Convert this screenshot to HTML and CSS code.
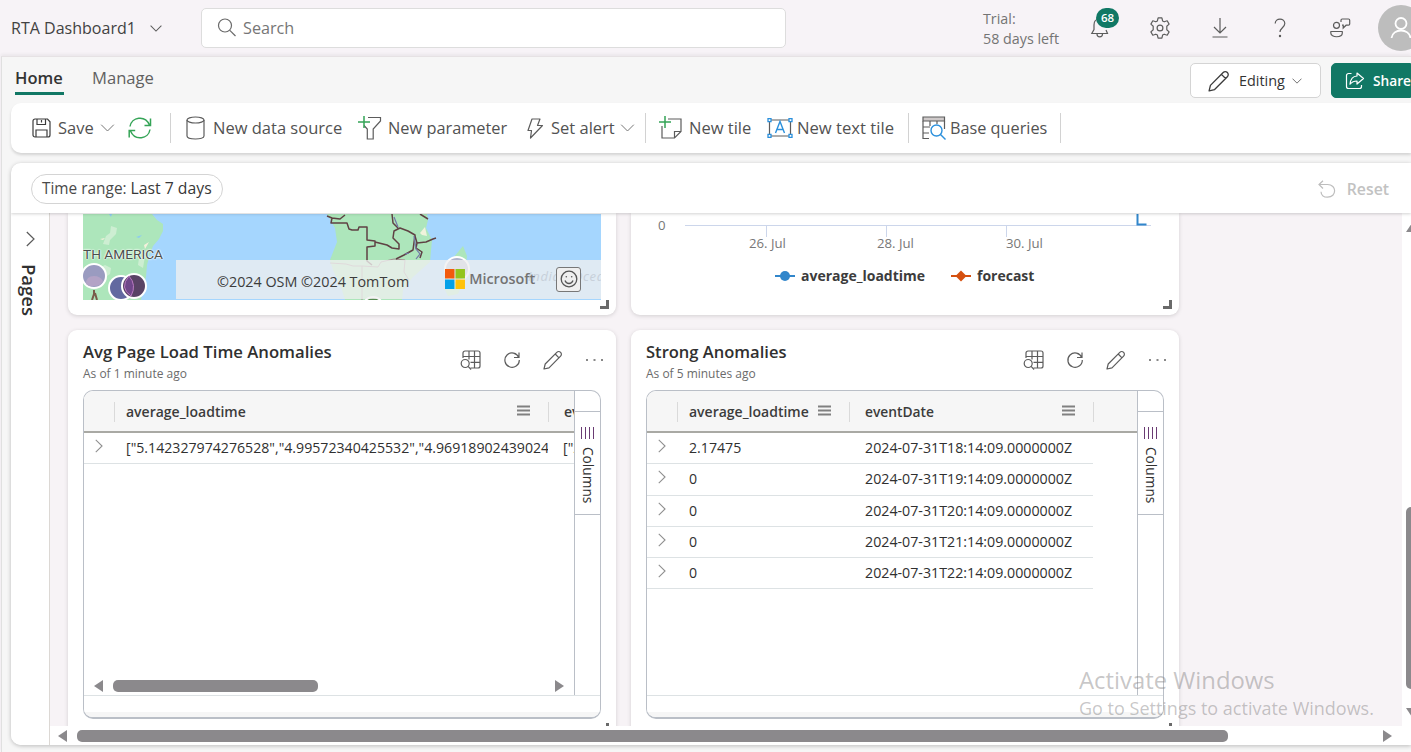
FILE: index.html
```html
<!DOCTYPE html>
<html lang="en">
<head>
<meta charset="utf-8">
<title>RTA Dashboard1</title>
<link rel="stylesheet" href="styles.css">
</head>
<body>
<svg class="sprite" aria-hidden="true">
  <symbol id="i-chevron" viewBox="0 0 14 8"><path d="M.7.7 7 7 13.3.7"/></symbol>
  <symbol id="i-chevron-right" viewBox="0 0 9 16"><path d="M.8 1 8 8 .8 15"/></symbol>
  <symbol id="i-pencil" viewBox="0 0 20 20"><path d="M1 19l1.200-5L13.800 2.300a2.600 2.600 0 0 1 3.800 3.800L6 17.800zM12.200 4l3.800 3.800" stroke-linejoin="round"/></symbol>
  <symbol id="i-explore" viewBox="0 0 22 20"><path d="M3 8V3a2 2 0 0 1 2-2H18a2 2 0 0 1 2 2v13a2 2 0 0 1-2 2h-7.500M9 1v8.500M14.500 1v17M3 6.500h17M10.500 12.300h9.500"/><circle cx="5.200" cy="13.500" r="4"/><path d="M8.100 16.400l3 3.100"/></symbol>
  <symbol id="i-reload" viewBox="0 0 18 18"><path d="M15.800 6.500A7.200 7.200 0 1 0 16.300 9M16 1.500V6.500H11"/></symbol>
  <symbol id="i-menu" viewBox="0 0 13 12"><path d="M0 1.500h13M0 5.500h13M0 9.500h13"/></symbol>
</svg>

<header class="topbar">
  <div class="workspace">RTA Dashboard1 <svg class="icon workspace-chevron" width="12" height="7"><use href="#i-chevron"/></svg></div>
  <div class="search">
    <svg class="icon" width="20" height="20" viewBox="0 0 20 20"><circle cx="8" cy="7.500" r="6.500"/><path d="M12.800 12.300l5.700 5.700"/></svg>
    <span>Search</span>
  </div>
  <div class="trial">Trial:<br>58 days left</div>
  <div class="top-actions">
    <div class="bell">
      <svg class="icon" width="20" height="22" viewBox="0 0 20 22"><path d="M9.500 2C5.500 2 4 5 4 8v4.500L1.800 16.500h15.700L16 13M7 17c0 3.800 5.500 3.800 5.500 0"/></svg>
      <span class="badge">68</span>
    </div>
    <svg class="icon" width="24" height="24" viewBox="0 0 24 24"><circle cx="12" cy="12" r="2.900"/><path d="M10.100 1.800h3.800l.7 3.100 1.600.9 3-1 1.900 3.300-2.300 2.100v3.600l2.300 2.100-1.900 3.300-3-1-1.600.9-.7 3.100h-3.800l-.7-3.100-1.600-.9-3 1-1.900-3.300 2.300-2.100v-3.600L2.900 8.100l1.900-3.300 3 1 1.600-.9z" stroke-linejoin="round"/></svg>
    <svg class="icon" width="20" height="22" viewBox="0 0 20 22"><path d="M10 1v14.500M4 10l6 6 6-6M2.500 20h15"/></svg>
    <svg class="icon" width="14" height="20" viewBox="0 0 14 20"><path d="M2.200 5.500C2.200-.5 11.800-.3 11.800 5.500c0 4-4.800 4.500-4.800 8.500"/><circle cx="7" cy="18" r=".6"/></svg>
    <svg class="icon" width="22" height="22" viewBox="0 0 22 22"><circle cx="7.500" cy="8.300" r="3"/><path d="M1.800 14.500h11.500v1.500c0 5-11.500 5-11.500 0z" stroke-linejoin="round"/><path d="M12 5V3.200A1.200 1.200 0 0 1 13.200 2h6.300a1.200 1.200 0 0 1 1.200 1.200V7a1.200 1.200 0 0 1-1.200 1.200h-2.400L14.200 11V8.200H13"/></svg>
  </div>
  <div class="avatar"><svg width="24" height="24" viewBox="0 0 24 24"><circle cx="12" cy="7.500" r="5.500"/><path d="M2.500 22c1-10 18-10 19 0"/></svg></div>
</header>

<main class="shell">
  <nav class="tabs">
    <span class="tab tab-active">Home</span>
    <span class="tab">Manage</span>
    <div class="mode">
      <button class="btn btn-edit"><svg class="icon dark" width="22" height="22"><use href="#i-pencil"/></svg><span>Editing</span><svg class="icon" width="10" height="6"><use href="#i-chevron"/></svg></button>
      <button class="btn btn-share"><svg class="icon" width="20" height="18" viewBox="0 0 20 18"><path d="M6.500 1.500H3.500a2 2 0 0 0-2 2v11a2 2 0 0 0 2 2h11a2 2 0 0 0 2-2V13M12 1l6.500 5.500L12 12V9c-3 0-5 .8-7 3.200C5.500 7.500 8 4.200 12 4z" stroke-linejoin="round"/></svg><span>Share</span></button>
    </div>
  </nav>

  <section class="toolbar">
    <div class="cmd cmd-save">
      <svg class="icon dark" width="19" height="20" viewBox="0 0 19 20"><path d="M1 3a2 2 0 0 1 2-2h12.500L18 3.800V17a2 2 0 0 1-2 2H3a2 2 0 0 1-2-2zM5 1v5.500h8.500V1M4 19v-7h11v7M9.500 2v2.500"/></svg>
      <span>Save</span>
      <svg class="icon thin" width="15" height="8"><use href="#i-chevron"/></svg>
    </div>
    <div class="cmd"><svg class="icon green refresh" width="24" height="22" viewBox="0 0 24 22"><path d="M2 9.500C3.500 0 17 -2.500 21.500 8M22.500 1.500v7h-6M22 12.500C20.500 22 7 24.500 2.500 14M1.200 20.500v-7h6"/></svg></div>
    <div class="cmd ruled pad-wide"><svg class="icon" width="20" height="24" viewBox="0 0 20 24"><ellipse cx="9.500" cy="4" rx="8.500" ry="3"/><path d="M1 4v16c0 4 17 4 17 0V4"/></svg><span class="after-db">New data source</span></div>
    <div class="cmd"><svg class="icon" width="24" height="24" viewBox="0 0 24 24"><path d="M10 1.500h12.500V5l-7.300 8v10H9.300V13L6 9.500"/><path class="green" d="M6 0v12M0 6h12"/></svg><span class="after-param">New parameter</span></div>
    <div class="cmd"><svg class="icon" width="17" height="21" viewBox="0 0 17 21"><path d="M5 1h8L10.500 7.500H15.500L3.500 20 4.500 12.500H1z" stroke-linejoin="round"/></svg><span class="after-bolt">Set alert</span><svg class="icon thin" width="15" height="8"><use href="#i-chevron"/></svg></div>
    <div class="cmd ruled"><svg class="icon" width="24" height="24" viewBox="0 0 24 24"><path d="M9 3h13v12.500L15.500 22H3V10M22 15.500h-6.500V22"/><path class="green" d="M6 0v12M0 6h12"/></svg><span class="after-tile">New tile</span></div>
    <div class="cmd"><svg class="icon" width="26" height="20" viewBox="0 0 26 20"><path d="M2.500 2h21v16h-21z"/><path class="blue" d="M8.500 15l4.500-11.500L17.500 15M10 11.500h6"/><g class="handle"><path d="M1 .6h3v3H1zM22 .6h3v3h-3zM1 16.400h3v3H1zM22 16.400h3v3h-3z"/></g></svg><span class="after-text">New text tile</span></div>
    <div class="cmd ruled"><svg class="icon" width="24" height="24" viewBox="0 0 24 24"><path class="fill-head" d="M1 1h21.500v4H1z"/><path d="M7 22.500H1V5M22.500 5v8M1 11h7M1 17h6M8 5v5M15 5v3"/><g class="blue"><circle cx="14.500" cy="14.500" r="5.500"/><path d="M18.500 18.500l5 5"/></g></svg><span class="after-base">Base queries</span></div>
    <div class="cmd ruled"></div>
  </section>

  <section class="board">
    <div class="filterbar">
      <span class="pill">Time range: <b>Last 7 days</b></span>
      <span class="reset"><svg class="icon" width="18" height="18" viewBox="0 0 18 18"><path d="M1 4.500h8.500c9.500 0 9.500 12.700 0 12.700-4 0-6.300-2.500-6.500-5.500M5 .8L1 4.500l4 4"/></svg>Reset</span>
    </div>
    <div class="workarea">
      <aside class="pages"><svg class="icon" width="9" height="16"><use href="#i-chevron-right"/></svg><span>Pages</span></aside>
      <div class="stage">
        <div class="canvas">
          <article class="card card-map">
            <div class="map">
              <svg width="518" height="86" viewBox="0 0 518 86">
                <rect width="518" height="86" fill="#a5d6fe"/>
                <path fill="#ade6bb" d="M0 0H69L74 6l6 4v7l-4 8-6 7-3 8-3 11-1 12-3 10-2 13H0z"/>
                <path fill="#cdeed2" d="M28 12l6 2-1 6-6 6-1 5-6-1 3-8 4-3zM16 54l6-3 6 3-1 6-6 4-5-4zM56 44l6-2-2 12-5-3z"/>
                <path fill="#f5f0dc" d="M17 25l5-1-2 2zM61 31l5-3-4 7z"/>
                <path fill="#8dcbf0" d="M53 23l6-2-3 3zM26 0h3l-1 3z"/>
                <path fill="#ade6bb" d="M244 0l8 14 2 14-7 18 3 10 9 20 3 10h57l1-10 10-13 17-15 2-22-6-12 2-8-1-6zM380 32l4 10-3 24-6 14-10 2-3-6v-14l4-13z"/>
                <path fill="#f0f3dc" d="M342 13l-5 6 2 2 5 1z"/>
                <path fill="none" stroke="#a68d92" d="M247 49l16 1 7 2h9v34M279 52l16 1 3-5 13-3 11 1-1 12 5 8"/>
                <g fill="none" stroke="#5f4244" stroke-width="1.500" stroke-linejoin="round">
                  <path d="M244 2l5 2-1 5h16l2 6 3 1h6l1-3h8v13l8 1v5l-8 1v14l5 4M249 4l8 1 5-4M292 28l12 3 5 3 7 1v-5l-6-6 1-7 6-3 8 3 7 4-2 15-9 5-8 4M309 0l1 9 5 5M332 22l2 7 9-1 7-3 3-1M334 29l-1 5 6 4-2 6M337 0l8 5"/>
                </g>
                <path fill="none" stroke="#7277a8" stroke-width="1.200" d="M311 3l4 10M331 22l2 13 4 5-4 5M322 40l4-1"/>
                <path fill="none" stroke="#795b4a" stroke-width="2" d="M11 76v4l-2 6M12 79l2 7"/>
                <g stroke="#fff" stroke-width="2">
                  <circle cx="11" cy="62" r="12" fill="#9a9bc0"/>
                  <circle cx="38" cy="74" r="12" fill="#6269a0"/>
                  <circle cx="51" cy="72" r="12" fill="#594365"/>
                  <circle cx="374" cy="55" r="12" fill="#b0b4cc"/>
                  <circle cx="290" cy="93" r="10" fill="#548b50"/>
                </g>
                <path fill="#b3a3c6" d="M3 70q0-8 8-8 6 0 9 5-2 5-9 5-5 1-8-2z"/>
                <path fill="#70478a" stroke="#b87abf" d="M46 62q8 9 2 20-12-8-2-20z"/>
              </svg>
              <span class="map-continent">TH AMERICA</span>
              <div class="map-credit">
                <span>©2024 OSM ©2024 TomTom</span>
                <i class="ocean">Indian Ocean</i>
                <svg class="ms-logo" width="20" height="20" viewBox="0 0 20 20"><path fill="#f25a0c" d="M0 0h9.500v9.500H0z"/><path fill="#93c41c" d="M10.500 0H20v9.500h-9.500z"/><path fill="#05a1e8" d="M0 10.500h9.500V20H0z"/><path fill="#ffc20a" d="M10.500 10.500H20V20h-9.500z"/></svg>
                <b>Microsoft</b>
                <span class="smile"><svg width="18" height="18" viewBox="0 0 18 18"><circle cx="9" cy="9" r="7.800"/><path d="M5 10.500c1.500 4 6.500 4 8 0"/><circle class="eye" cx="6.300" cy="6.800" r=".8"/><circle class="eye" cx="11.700" cy="6.800" r=".8"/></svg></span>
              </div>
            </div>
            <i class="grip"></i>
          </article>

          <article class="card card-chart">
            <svg width="548" height="101" viewBox="0 0 548 101">
              <path d="M54 11.500H520M135.500 11.500V23M255.500 11.500V23M375.500 11.500V23" fill="none" stroke="#ccd6eb"/>
              <path d="M506.500 0v10.500h9" fill="none" stroke="#3186cb" stroke-width="2"/>
              <g class="axis"><text x="27" y="15.500">0</text><text x="118" y="34">26. Jul</text><text x="246" y="34">28. Jul</text><text x="375" y="34">30. Jul</text></g>
              <path d="M144 62h20" stroke="#3186cb" stroke-width="2"/><circle cx="154" cy="62" r="5" fill="#3186cb"/>
              <path d="M320 62h20" stroke="#d5500f" stroke-width="2"/><path d="M330 56.500l5.500 5.500-5.500 5.500-5.500-5.500z" fill="#d5500f"/>
              <g class="legend"><text x="170" y="67">average_loadtime</text><text x="346" y="67">forecast</text></g>
            </svg>
            <i class="grip"></i>
          </article>

          <article class="card card-table">
            <header class="card-head">
              <div><h2>Avg Page Load Time Anomalies</h2><p>As of 1 minute ago</p></div>
              <div class="card-tools">
                <svg class="icon" width="22" height="20"><use href="#i-explore"/></svg>
                <svg class="icon" width="18" height="18"><use href="#i-reload"/></svg>
                <svg class="icon" width="20" height="20"><use href="#i-pencil"/></svg>
                <svg class="dots" width="18" height="4" viewBox="0 0 18 4"><path d="M0 1h2v2H0zM7.500 1h2v2h-2zM15 1h2v2h-2z"/></svg>
              </div>
            </header>
            <div class="grid">
              <div class="grid-main">
                <div class="grid-view">
                  <div class="row row-head cols-wide"><span class="cell-exp"></span><span class="cell">average_loadtime<svg class="menu" width="13" height="12"><use href="#i-menu"/></svg></span><span class="cell cell-cut">eventDate</span></div>
                  <div class="row cols-wide"><span class="cell-exp"><svg class="icon" width="8" height="14"><use href="#i-chevron-right"/></svg></span><span class="cell cell-list">["5.142327974276528","4.99572340425532","4.96918902439024</span><span class="cell cell-cut">["2024</span></div>
                  <div class="hscroll"><i class="arrow-left"></i><i class="thumb"></i><i class="arrow-right"></i></div>
                </div>
                <div class="side"><div class="side-btn"><i class="bars"></i><span>Columns</span></div></div>
              </div>
              <div class="grid-foot"></div>
            </div>
            <i class="grip grip-cut"></i>
          </article>

          <article class="card card-table">
            <header class="card-head">
              <div><h2 class="h-strong">Strong Anomalies</h2><p>As of 5 minutes ago</p></div>
              <div class="card-tools">
                <svg class="icon" width="22" height="20"><use href="#i-explore"/></svg>
                <svg class="icon" width="18" height="18"><use href="#i-reload"/></svg>
                <svg class="icon" width="20" height="20"><use href="#i-pencil"/></svg>
                <svg class="dots" width="18" height="4" viewBox="0 0 18 4"><path d="M0 1h2v2H0zM7.500 1h2v2h-2zM15 1h2v2h-2z"/></svg>
              </div>
            </header>
            <div class="grid">
              <div class="grid-main">
                <div class="grid-view">
                  <div class="row row-head cols-narrow"><span class="cell-exp"></span><span class="cell">average_loadtime<svg class="menu" width="13" height="12"><use href="#i-menu"/></svg></span><span class="cell">eventDate<svg class="menu" width="13" height="12"><use href="#i-menu"/></svg></span><span class="cell-end"></span></div>
                  <div class="row cols-narrow"><span class="cell-exp"><svg class="icon" width="8" height="14"><use href="#i-chevron-right"/></svg></span><span class="cell">2.17475</span><span class="cell">2024-07-31T18:14:09.0000000Z</span></div>
                  <div class="row cols-narrow"><span class="cell-exp"><svg class="icon" width="8" height="14"><use href="#i-chevron-right"/></svg></span><span class="cell">0</span><span class="cell">2024-07-31T19:14:09.0000000Z</span></div>
                  <div class="row cols-narrow"><span class="cell-exp"><svg class="icon" width="8" height="14"><use href="#i-chevron-right"/></svg></span><span class="cell">0</span><span class="cell">2024-07-31T20:14:09.0000000Z</span></div>
                  <div class="row cols-narrow"><span class="cell-exp"><svg class="icon" width="8" height="14"><use href="#i-chevron-right"/></svg></span><span class="cell">0</span><span class="cell">2024-07-31T21:14:09.0000000Z</span></div>
                  <div class="row cols-narrow"><span class="cell-exp"><svg class="icon" width="8" height="14"><use href="#i-chevron-right"/></svg></span><span class="cell">0</span><span class="cell">2024-07-31T22:14:09.0000000Z</span></div>
                </div>
                <div class="side"><div class="side-btn"><i class="bars"></i><span>Columns</span></div></div>
              </div>
              <div class="grid-foot"></div>
            </div>
            <i class="grip grip-cut"></i>
          </article>
        </div>
        <div class="vscroll"><i class="arrow-up"></i><i class="vthumb"></i><i class="arrow-down"></i></div>
        <div class="hscroll stage-scroll"><i class="arrow-left"></i><i class="thumb"></i><i class="arrow-right"></i></div>
      </div>
    </div>
  </section>
</main>

<div class="watermark"><strong>Activate Windows</strong><span>Go to Settings to activate Windows.</span></div>
</body>
</html>
```
FILE: styles.css
```css
* { box-sizing: border-box; }
body { margin: 0; width: 1411px; height: 752px; overflow: hidden; background: #f7f3f7; color: #484848; font-family: "Open Sans", "Noto Sans", sans-serif; font-size: 16.4px; line-height: 20px; white-space: nowrap; }
.sprite { position: absolute; width: 0; height: 0; }
.icon { display: block; flex: none; fill: none; stroke: #5c5c5c; stroke-width: 1.200; }
.icon.dark { stroke: #3c3c3c; }
.icon.thin { stroke: #777; stroke-width: 1; }
.icon.green, .icon .green { stroke: #35a457; stroke-width: 1.500; }
.icon .blue { stroke: #2b90dc; stroke-width: 1.400; }
.icon .handle { fill: #fff; stroke: #2b90dc; stroke-width: 1.300; }
.icon .fill-head { fill: #cfcaca; }

/* top bar */
.topbar { display: flex; align-items: center; height: 56px; padding-left: 11px; overflow: hidden; }
.topbar > * { flex: none; }
.workspace { display: flex; align-items: center; gap: 14px; width: 190px; font-size: 16.050px; color: #424242; }
.search { display: flex; align-items: center; gap: 6px; width: 585px; height: 40px; padding-left: 15px; background: #fff; border: 1px solid #ddd; border-radius: 5px; font-size: 16.200px; color: #767676; }
.search .icon { stroke: #6a6a6a; }
.trial { width: 77px; margin-left: 197px; padding-top: 1px; font-size: 14.300px; color: #747474; }
.top-actions { display: grid; grid-template-columns: repeat(5, 60px); justify-items: center; align-items: center; margin-left: 10px; }
.bell { position: relative; }
.badge { position: absolute; left: 6px; top: -9px; width: 23px; height: 20px; border-radius: 10px; background: #117865; color: #fff; font-size: 11.500px; font-weight: 600; line-height: 20px; text-align: center; }
.avatar { display: flex; align-items: center; justify-content: center; width: 46px; height: 46px; margin-left: 8px; border-radius: 50%; background: #bdbdbd; }
.avatar svg { fill: none; stroke: #fff; stroke-width: 1.800; }

/* ribbon */
.shell { height: 696px; margin-left: 1px; border-top: 1px solid #e6e2e4; border-left: 1px solid #e0e0e0; background: #f6f6f6; box-shadow: 0 -2px 3px rgba(0,0,0,.05); }
.tabs { display: flex; height: 46px; padding-left: 13px; gap: 28px; color: #616161; }
.tab { height: 38px; padding-top: 11px; font-size: 16.600px; }
.tab-active { width: 49px; border-bottom: 3px solid #117865; font-weight: 600; color: #333; font-size: 16.500px; }
.mode { display: flex; gap: 10px; margin: 6px 0 0 auto; }
.btn { display: flex; align-items: center; height: 35px; padding: 0; border: 1px solid #d4d4d4; border-radius: 5px; background: #fff; color: #333; font: 14.400px "Open Sans", sans-serif; }
.btn-edit { width: 131px; padding-left: 17px; }
.btn-edit span { width: 53px; margin-left: 9px; text-align: left; }
.btn-share { width: 80px; padding-left: 13px; border-color: #117865; border-radius: 5px 0 0 5px; background: #117865; color: #fff; font-weight: 600; font-size: 13.700px; }
.btn-share span { margin-left: 8px; }
.btn-share .icon { stroke: #fff; }
.toolbar { display: grid; grid-template-columns: 97px 41px 188px 169px 118px 122px 141px 152px 20px; height: 50px; margin-left: 9px; padding: 10px 0 10px 21px; background: #fff; border-radius: 10px 0 0 10px; box-shadow: 0 2px 3px rgba(0,0,0,.14); font-size: 16.500px; color: #525252; }
.cmd { display: flex; align-items: center; height: 30px; }
.cmd-save { gap: 5px; }
.cmd-save span { width: 37px; margin-left: 2px; }
.refresh { margin-left: -1px; }
.ruled { border-left: 1px solid #d2d2d2; padding-left: 13px; }
.pad-wide { padding-left: 15px; }
.after-db { margin-left: 7px; }
.after-param { margin-left: 6px; font-size: 16.350px; }
.after-bolt { margin-left: 7px; width: 69px; }
.after-tile { margin-left: 6px; }
.after-text { margin-left: 4px; font-size: 16.650px; }
.after-base { margin-left: 4px; font-size: 16.250px; }

/* dashboard panel */
.board { height: 582px; margin: 10px 0 0 9px; background: #fff; border-radius: 10px 0 0 10px; box-shadow: 0 1px 4px rgba(0,0,0,.24); overflow: hidden; }
.filterbar { position: relative; z-index: 1; display: flex; align-items: center; justify-content: space-between; height: 50px; padding: 1px 22px 0 20px; background: #fff; box-shadow: 0 1px 3px rgba(0,0,0,.18); }
.pill { height: 30px; width: 192px; padding-left: 10px; border: 1px solid #d4d4d4; border-radius: 15px; font-size: 15.400px; line-height: 27px; color: #4a4a4a; }
.pill b { font-weight: 400; font-size: 15.750px; color: #383838; }
.reset { display: flex; align-items: center; gap: 11px; font-size: 15.800px; font-weight: 600; color: #c2c2c2; }
.reset .icon { stroke: #bdbdbd; }
.workarea { display: flex; height: 532px; }
.pages { display: flex; flex-direction: column; align-items: center; gap: 17px; width: 39px; padding-top: 18px; border-right: 1px solid #dcd8d4; background: #fff; }
.pages .icon { margin-left: 1px; }
.pages span { writing-mode: vertical-rl; font-size: 18.500px; font-weight: 600; color: #303030; line-height: 24px; margin-right: 2px; }
.stage { display: grid; grid-template: 513px 19px / 1352px 9px; }
.canvas { display: grid; grid-template: 102px 405px / 548px 548px; gap: 15px; height: 513px; padding-left: 18px; overflow: hidden; background: #f7f3f6; }
.card { position: relative; background: #fff; border-radius: 9px; box-shadow: 0 1px 4px rgba(0,0,0,.15); }
.card-map, .card-chart { padding-top: 1px; border-radius: 0 0 9px 9px; }
.grip { position: absolute; right: 7px; bottom: 6px; width: 9px; height: 9px; border: solid #6a6a6a; border-width: 0 3px 3px 0; }
.grip-cut { bottom: 3px; }

/* map */
.map { position: relative; width: 518px; height: 86px; margin-left: 15px; overflow: hidden; }
.map svg { display: block; }
.map-continent { position: absolute; left: 0; top: 30px; font: 13.700px/20px Roboto, sans-serif; color: #4b4f4d; text-shadow: 0 0 2px #fff, 0 0 2px #fff, 0 0 1px #fff; }
.map-credit { position: absolute; left: 93px; top: 46px; display: flex; align-items: center; width: 425px; height: 39px; padding: 4px 20px 0 41px; background: rgba(239,239,240,.78); font-size: 14.350px; color: #3c3c3c; }
.map-credit b { width: 87px; margin: -5px 0 0 4px; font-weight: 600; color: #737373; font-size: 14.400px; z-index: 1; }
.ms-logo { margin: -6px 0 0 36px; }
.ocean { position: absolute; left: 352px; top: 6px; font-size: 13px; letter-spacing: .7px; color: #c7d0da; }
.smile { display: flex; align-items: center; justify-content: center; width: 25px; height: 25px; margin-top: -5px; border: 1px solid #777; border-radius: 3px; background: #efefef; z-index: 1; }
.smile svg { fill: none; stroke: #555; stroke-width: 1.300; }
.smile .eye { fill: #555; stroke: none; }

/* chart */
.card-chart > svg { display: block; }
.axis { font-size: 13.200px; fill: #777; }
.legend { font-size: 14px; font-weight: 700; fill: #3c3c3c; }

/* table tiles */
.card-head { display: flex; justify-content: space-between; height: 60px; padding: 12px 13px 0 15px; }
h2 { margin: 0; font-size: 16.700px; line-height: 20px; font-weight: 600; color: #303030; }
.h-strong { font-size: 16.550px; }
.card-head p { margin: 3px 0 0; font-size: 11.980px; line-height: 18px; color: #6b6b6b; }
.card-tools { display: flex; align-items: center; height: 36px; }
.card-tools .icon:nth-child(2) { margin-left: 21px; }
.card-tools .icon:nth-child(3) { margin-left: 22px; }
.dots { margin-left: 23px; margin-right: -1px; fill: #888; }
.grid { display: flex; flex-direction: column; width: 518px; height: 329px; margin-left: 15px; border: 1px solid #babfc7; border-bottom-width: 2px; border-radius: 10px; overflow: hidden; font-size: 14.150px; color: #303030; }
.grid-main { display: flex; height: 305px; border-bottom: 1px solid #dde2e4; }
.grid-view { display: flex; flex-direction: column; width: 490px; overflow: hidden; }
.side { width: 26px; padding-top: 20px; border-left: 1px solid #babfc7; }
.side-btn { display: flex; flex-direction: column; align-items: center; height: 104px; padding-top: 15px; border: solid #babfc7; border-width: 1px 0; }
.side-btn span { writing-mode: vertical-rl; margin-top: 8px; font-size: 13.700px; }
.bars { width: 14px; height: 12px; background: repeating-linear-gradient(90deg, #6a3b73 0 1.500px, #fff 1.500px 4px); }
.row { display: grid; flex: none; align-items: center; height: 31.250px; border-bottom: 1px solid #dde2e4; }
.cols-wide { grid-template-columns: 30px 434px 26px; width: 490px; }
.cols-narrow { grid-template-columns: 30px 172px 244px; width: 446px; }
.row-head { height: 42px; padding-top: 1px; border-bottom: 2px solid #a9a9a4; background: #f6f6f6; font-weight: 600; font-size: 14px; color: #3c3c3c; }
.row-head.cols-narrow { grid-template-columns: 30px 172px 244px 1fr; width: 490px; }
.cell-exp { display: flex; justify-content: center; align-items: center; height: 20px; padding-bottom: 4px; padding-right: 1px; }
.cell-exp .icon { stroke: #8f8f8f; }
.cell { display: flex; align-items: center; justify-content: space-between; height: 20px; padding: 0 18px 0 12px; overflow: hidden; }
.cols-narrow .cell:nth-child(3) { padding-left: 16px; padding-right: 18px; font-size: 14.220px; }
.row-head .cell, .cell-end { height: 20px; padding-left: 11px; border-left: 1px solid #dadada; }
.row-head.cols-narrow .cell:nth-child(3) { padding-left: 15px; font-size: 13.800px; }
.cell-list { padding-right: 0; }
.cols-wide .cell-cut { padding: 0 0 0 15px; }
.menu { flex: none; stroke: #808080; stroke-width: 2; margin-top: -1px; }
.grid-foot { flex: 1; background: linear-gradient(#fff 16px, #f6f6f6 16px); }

/* scrollbars */
.hscroll { display: flex; align-items: center; height: 19px; margin-top: auto; padding: 0 10px; }
.thumb { width: 205px; height: 12px; margin-left: 10px; border-radius: 5px; background: #8b898c; }
.arrow-left, .arrow-right { border: 6px solid transparent; border-right: 9px solid #8b898c; border-left: 0; }
.arrow-right { margin-left: auto; border-right: 0; border-left: 9px solid #8b898c; }
.stage-scroll { grid-column: 1 / 3; padding: 0 19px 0 8px; margin: 0; background: #fff; }
.stage-scroll .thumb { width: 1151px; }
.vscroll { display: flex; flex-direction: column; align-items: flex-start; padding: 10px 0 9px 4px; overflow: hidden; background: #fff; }
.vthumb { width: 11px; height: 182px; margin-top: 275px; border-radius: 5px; background: #8b898c; }
.arrow-up { border: 6px solid transparent; border-top: 0; border-bottom: 9px solid #8b898c; }
.arrow-down { margin-top: auto; border: 6px solid transparent; border-bottom: 0; border-top: 9px solid #8b898c; }

.watermark { position: absolute; left: 1079px; top: 664px; display: flex; flex-direction: column; z-index: 5; color: rgba(120,118,120,.42); }
.watermark strong { font-weight: 400; font-size: 23.850px; line-height: 32px; }
.watermark span { font-size: 18px; line-height: 24px; }
```
